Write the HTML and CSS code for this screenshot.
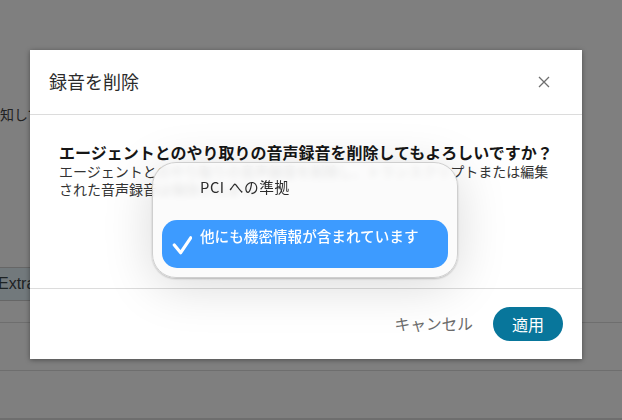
FILE: index.html
```html
<!DOCTYPE html>
<html lang="ja">
<head>
    <meta charset="UTF-8">
    <meta name="viewport" content="width=device-width, initial-scale=1.0">
    <title>録音を削除</title>
    <link rel="stylesheet" href="styles.css">
</head>
<body>

<div class="page">
    <p class="page-note">知しています</p>
    <div class="chip-row"><span class="chip">Extra</span></div>
    <div class="page-row"></div>
    <div class="page-row"></div>
</div>

<div class="modal">
    <div class="modal-header">
        <h2>録音を削除</h2>
        <svg class="close-icon" width="12" height="12" viewBox="0 0 12 12">
            <path d="M1 1L11 11M11 1L1 11" stroke="#6f6f6f" stroke-width="1.3" fill="none"/>
        </svg>
    </div>
    <div class="modal-body">
        <p class="question">エージェントとのやり取りの音声録音を削除してもよろしいですか？</p>
        <p class="detail">エージェントとのやり取りの音声録音を削除し、トランスクリプトまたは編集された音声録音は保持されます。</p>
    </div>
    <div class="modal-footer">
        <button class="cancel-btn">キャンセル</button>
        <button class="apply-btn">適用</button>
    </div>

    <div class="reason-menu">
        <div class="reason-item">PCI への準拠</div>
        <div class="reason-item selected">
            <svg class="check-icon" width="20" height="20" viewBox="0 0 20 20">
                <path d="M2.3 9L8.7 16.7L18.7 1.8" stroke="#fff" stroke-width="3.2" stroke-linecap="round" stroke-linejoin="round" fill="none"/>
            </svg>
            他にも機密情報が含まれています
        </div>
    </div>
</div>

</body>
</html>
```

FILE: styles.css
```css
body {
    margin: 0;
    width: 622px;
    height: 420px;
    overflow: hidden;
    position: relative;
    background-color: #7f7f7f;
    font-family: "Noto Sans CJK JP", "Liberation Sans", sans-serif;
    color: #1a1a1a;
}

p, h2 {
    margin: 0;
}

.page {
    height: 419px;
    display: flex;
    flex-direction: column;
    border-bottom: 1px solid #6e6e6e;
}

.page-note {
    margin-top: 104px;
    height: 20px;
    line-height: 20px;
    font-size: 14px;
    color: #222;
    white-space: nowrap;
}

.chip-row {
    margin-top: 143px;
    height: 56px;
    border-bottom: 1px solid #6e6e6e;
}

.chip {
    display: block;
    width: 40px;
    height: 32px;
    margin-left: -10px;
    padding-left: 7px;
    line-height: 32px;
    font-size: 16px;
    font-family: "Liberation Sans", sans-serif;
    color: #1d2224;
    background-color: #72797c;
    border: 1px solid #666;
}

.page-row {
    height: 48px;
    border-bottom: 1px solid #6e6e6e;
}

.modal {
    position: absolute;
    left: 30px;
    top: 50px;
    width: 552px;
    height: 309px;
    display: flex;
    flex-direction: column;
    background-color: #fff;
    box-shadow: 0 1px 5px rgba(0, 0, 0, 0.4);
}

.modal-header {
    height: 64px;
    display: flex;
    align-items: center;
    justify-content: space-between;
    padding: 0 32px 0 19px;
    border-bottom: 1px solid #dcdcdc;
}

.modal-header h2 {
    font-size: 18px;
    font-weight: 400;
    line-height: 26px;
    margin-top: -2px;
    color: #2b2b2b;
}

.modal-body {
    flex: 1;
    padding: 27px 28px 0 29px;
    font-size: 14px;
    line-height: 18px;
    color: #333;
}

.question {
    font-size: 16px;
    font-weight: 700;
    line-height: 20px;
    color: #161616;
    white-space: nowrap;
}

.modal-footer {
    height: 70px;
    display: flex;
    align-items: center;
    justify-content: flex-end;
    gap: 20px;
    padding-right: 19px;
    border-top: 1px solid #dcdcdc;
}

.cancel-btn {
    padding: 0 0 2px;
    border: none;
    background: none;
    font: inherit;
    font-size: 15.7px;
    color: #6b6b6b;
}

.apply-btn {
    width: 70px;
    height: 34px;
    padding: 0;
    border: none;
    border-radius: 17px;
    background-color: #08769b;
    font: inherit;
    font-size: 16px;
    color: #fff;
}

.reason-menu {
    position: absolute;
    left: 122px;
    top: 112px;
    width: 306px;
    height: 116px;
    box-sizing: border-box;
    padding: 9px;
    border: 1px solid #cfcfcf;
    border-radius: 24px;
    background-color: rgba(250, 250, 250, 0.88);
    backdrop-filter: blur(3px);
    box-shadow: 0 8px 50px rgba(0, 0, 0, 0.15), 0 1px 2px rgba(0, 0, 0, 0.22);
}

.reason-item {
    height: 48px;
    padding: 0 0 0 38px;
    font-size: 14.7px;
    letter-spacing: 0.6px;
    line-height: 30px;
    color: #2b2b2b;
}

.reason-item.selected {
    position: relative;
    border-radius: 15px;
    background-color: #3d9bff;
    color: #fff;
    font-size: 14.6px;
    letter-spacing: 0;
    font-weight: 500;
    line-height: 32px;
}

.check-icon {
    position: absolute;
    left: 10px;
    top: 16px;
}
```
